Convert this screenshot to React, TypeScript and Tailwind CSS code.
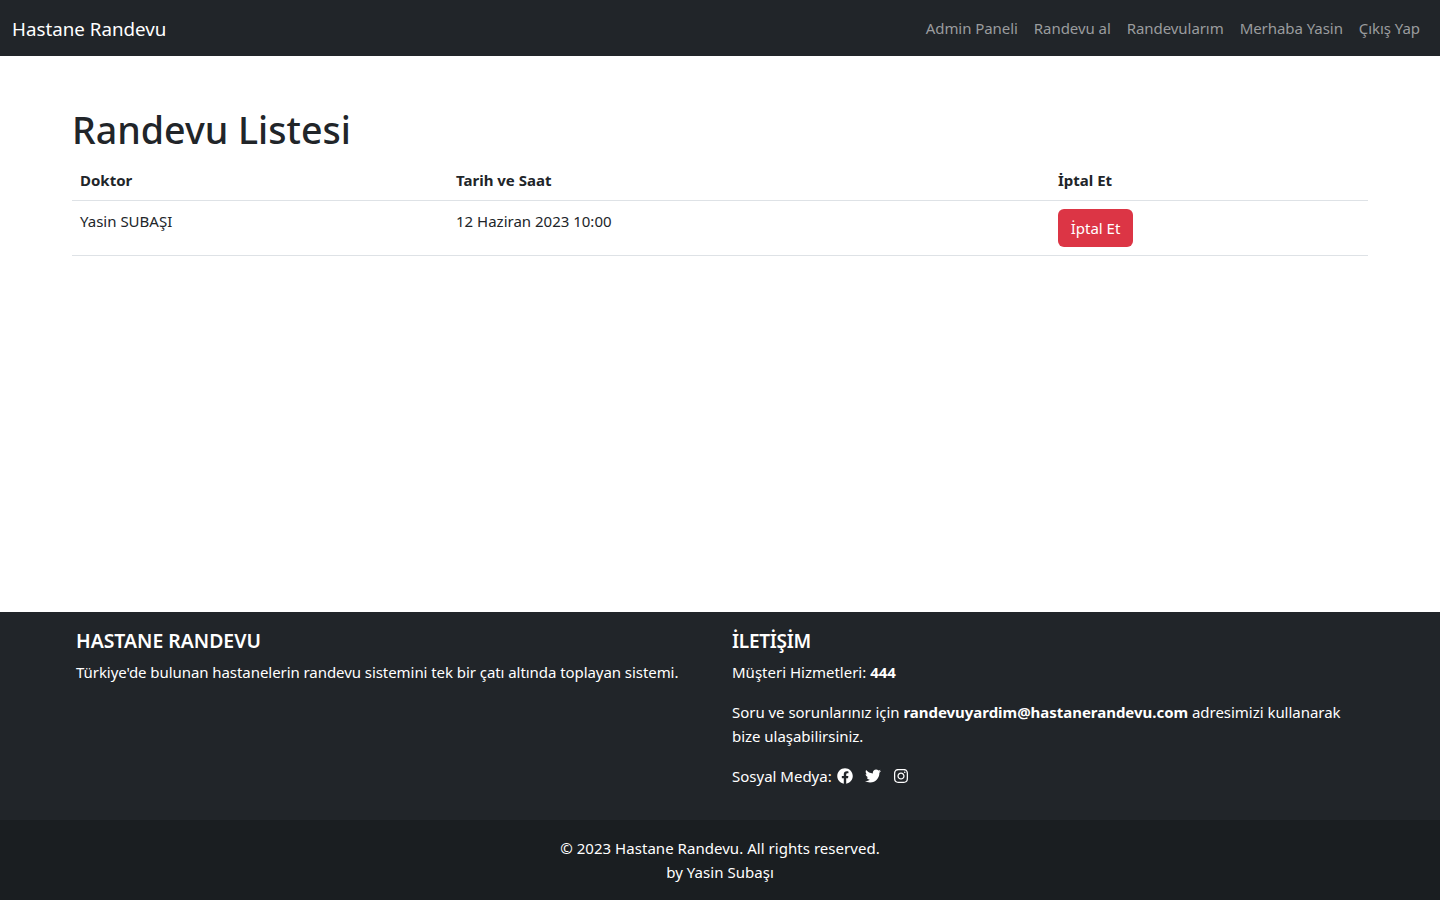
import { FaFacebook, FaInstagram, FaTwitter } from 'react-icons/fa';

const navLinks = ['Admin Paneli', 'Randevu al', 'Randevularım', 'Merhaba Yasin', 'Çıkış Yap'];

function Navbar() {
  return (
    <nav className="flex h-14 items-center justify-between bg-[#212529] px-3">
      <a className="pt-0.5 text-[18.75px] leading-[30px] text-white">Hastane Randevu</a>
      <div className="flex">
        {navLinks.map((link) => (
          <a key={link} className="px-2 text-[15px] leading-6 tracking-[-0.06px] text-[#9a9c9e]">
            {link}
          </a>
        ))}
      </div>
    </nav>
  );
}

function AppointmentTable() {
  return (
    <table className="w-full table-fixed border-collapse text-left text-[15px] leading-6 text-[#212529]">
      <colgroup>
        <col className="w-[376px]" />
        <col className="w-[602px]" />
        <col />
      </colgroup>
      <thead>
        <tr className="border-b border-[#dee2e6]">
          <th className="p-2 font-bold">Doktor</th>
          <th className="p-2 font-bold">Tarih ve Saat</th>
          <th className="p-2 font-bold">İptal Et</th>
        </tr>
      </thead>
      <tbody>
        <tr className="border-b border-[#dee2e6]">
          <td className="p-2 align-top">Yasin SUBAŞI</td>
          <td className="p-2 align-top">12 Haziran 2023 10:00</td>
          <td className="p-2 align-top">
            <button className="h-[38px] w-[75px] rounded-md bg-[#dc3545] text-white">İptal Et</button>
          </td>
        </tr>
      </tbody>
    </table>
  );
}

function Footer() {
  return (
    <footer className="bg-[#212529] text-[15px] leading-6 text-white">
      <div className="mx-auto grid h-[208px] w-[1312px] grid-cols-2 pt-[17px]">
        <div className="px-3">
          <h5 className="mb-[7px] text-[19.4px] leading-6 font-semibold">HASTANE RANDEVU</h5>
          <p className="tracking-[-0.06px]">
            Türkiye'de bulunan hastanelerin randevu sistemini tek bir çatı altında toplayan sistemi.
          </p>
        </div>
        <div className="px-3">
          <h5 className="mb-[7px] text-[19px] leading-6 font-semibold tracking-[-0.25px]">İLETİŞİM</h5>
          <p className="mb-4">
            Müşteri Hizmetleri: <strong>444</strong>
          </p>
          <p className="mb-4 tracking-[-0.03px]">
            Soru ve sorunlarınız için <strong>randevuyardim@hastanerandevu.com</strong> adresimizi kullanarak bize
            ulaşabilirsiniz.
          </p>
          <div className="flex items-center">
            <span className="mr-[5px]">Sosyal Medya:</span>
            <div className="flex items-center gap-3">
              <FaFacebook className="size-4" />
              <FaTwitter className="size-4" />
              <FaInstagram className="size-4" />
            </div>
          </div>
        </div>
      </div>
      <div className="flex h-20 flex-col items-center justify-center bg-[#1a1e21] text-center tracking-[0.04px]">
        <p>© 2023 Hastane Randevu. All rights reserved.</p>
        <p>by Yasin Subaşı</p>
      </div>
    </footer>
  );
}

export default function App() {
  return (
    <div className="flex min-h-[900px] flex-col bg-white font-['Noto_Sans',sans-serif]">
      <Navbar />
      <main className="mx-auto w-[1296px] flex-1 pt-[50px]">
        <h1 className="mb-1.5 text-[37.6px] leading-[48px] font-medium text-[#212529]">Randevu Listesi</h1>
        <AppointmentTable />
      </main>
      <Footer />
    </div>
  );
}
